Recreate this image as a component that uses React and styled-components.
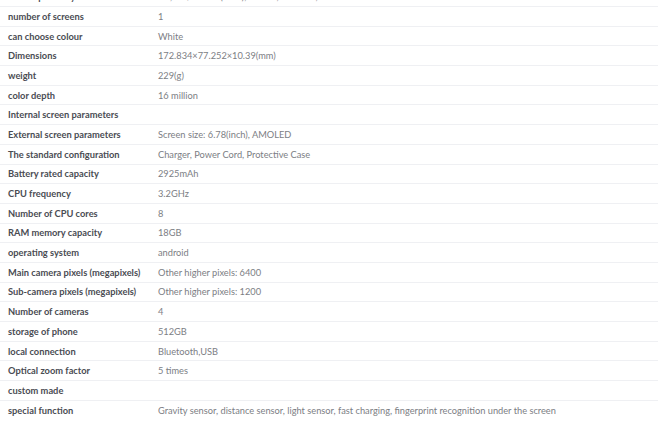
import React from 'react';
import styled, { createGlobalStyle } from 'styled-components';

const GlobalStyle = createGlobalStyle`
  html, body {
    margin: 0;
    padding: 0;
    background: #ffffff;
    overflow: hidden;
  }
`;

const Page = styled.div`
  width: 658px;
  height: 425px;
  overflow: hidden;
  font-family: 'Lato', 'Open Sans', sans-serif;
`;

// the list is scrolled, so its first row sits partly above the top edge
const SpecTable = styled.div`
  margin-top: -12.7px;
  display: flex;
  flex-direction: column;
`;

const Row = styled.div`
  display: grid;
  grid-template-columns: 150px 1fr;
  align-items: center;
  height: 19.7px;
  box-sizing: border-box;
  border-bottom: ${p => (p.$last ? 'none' : '1px solid #eff0f3')};
`;

const Label = styled.div`
  padding-left: 8px;
  font-size: 9.3px;
  font-weight: 700;
  color: #4a4c53;
  white-space: nowrap;
`;

const Value = styled.div`
  padding-left: 8px;
  font-size: 9.25px;
  color: #7c7e84;
  white-space: nowrap;
`;

const specs = [
  ['mobile phone system', '5G,LTE/4G LTE(FDD),TD-LTE,WCDMA,GSM'],
  ['number of screens', '1'],
  ['can choose colour', 'White'],
  ['Dimensions', '172.834×77.252×10.39(mm)'],
  ['weight', '229(g)'],
  ['color depth', '16 million'],
  ['Internal screen parameters', ''],
  ['External screen parameters', 'Screen size: 6.78(inch), AMOLED'],
  ['The standard configuration', 'Charger, Power Cord, Protective Case'],
  ['Battery rated capacity', '2925mAh'],
  ['CPU frequency', '3.2GHz'],
  ['Number of CPU cores', '8'],
  ['RAM memory capacity', '18GB'],
  ['operating system', 'android'],
  ['Main camera pixels (megapixels)', 'Other higher pixels: 6400'],
  ['Sub-camera pixels (megapixels)', 'Other higher pixels: 1200'],
  ['Number of cameras', '4'],
  ['storage of phone', '512GB'],
  ['local connection', 'Bluetooth,USB'],
  ['Optical zoom factor', '5 times'],
  ['custom made', ''],
  ['special function', 'Gravity sensor, distance sensor, light sensor, fast charging, fingerprint recognition under the screen'],
];

export default function App() {
  return (
    <Page>
      <GlobalStyle />
      <SpecTable>
        {specs.map(([label, value], i) => (
          <Row key={label} $last={i === specs.length - 1}>
            <Label>{label}</Label>
            <Value>{value}</Value>
          </Row>
        ))}
      </SpecTable>
    </Page>
  );
}
